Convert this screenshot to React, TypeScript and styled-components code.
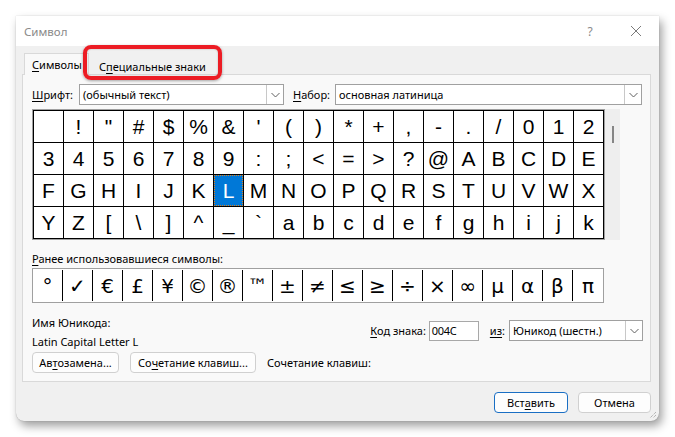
import React from 'react';
import styled, { createGlobalStyle } from 'styled-components';

const GlobalStyle = createGlobalStyle`
  html, body { margin: 0; padding: 0; background: #ffffff; }
  body { font-family: "Noto Sans", "Segoe UI", sans-serif; color: #000; }
  * { box-sizing: border-box; }
`;

const Page = styled.div`
  width: 675px;
  height: 437px;
  padding: 16px 16px 0 16px;
  background: #ffffff;
`;

const Dialog = styled.div`
  position: relative;
  width: 643px;
  height: 405px;
  background: #f0f0f0;
  border-radius: 0 0 8px 8px;
  box-shadow: 3px 5px 10px rgba(0, 0, 0, 0.38), 0 0 1px rgba(0, 0, 0, 0.35);
  display: flex;
  flex-direction: column;
`;

const TitleBar = styled.div`
  height: 30px;
  background: #ffffff;
  display: flex;
  align-items: center;
  padding-left: 8px;
`;

const Title = styled.span`
  font-size: 11.5px;
  color: #8a8a8a;
  flex: 1;
`;

const TitleButton = styled.div`
  width: 46px;
  height: 30px;
  display: flex;
  align-items: center;
  justify-content: center;
  font-size: 12px;
  color: #8a8a8a;
`;

const Body = styled.div`
  flex: 1;
  display: flex;
  flex-direction: column;
  padding: 7px 8px 8px 6px;
`;

const TabList = styled.div`
  position: relative;
  z-index: 1;
  display: flex;
  align-items: flex-end;
  height: 22px;
  margin: 0 0 -1px 2px;
`;

const Tab = styled.div<{ $active?: boolean }>`
  height: ${(p) => (p.$active ? '22px' : '18px')};
  ${(p) => (p.$active ? 'width: 65px;' : '')}
  padding: 0 ${(p) => (p.$active ? '7px' : '9px')};
  display: flex;
  align-items: center;
  font-size: 11px;
  white-space: nowrap;
  background: ${(p) => (p.$active ? '#f9f9f9' : 'transparent')};
  border: 1px solid ${(p) => (p.$active ? '#d9d9d9' : 'transparent')};
  border-bottom: none;
`;

const Highlight = styled.div`
  position: absolute;
  left: 59px;
  top: -8px;
  width: 139px;
  height: 35px;
  border: 4px solid #ec1c24;
  border-radius: 8px;
  box-shadow: 0 1px 3px rgba(0, 0, 0, 0.35), inset 0 0 2px rgba(0, 0, 0, 0.25);
  pointer-events: none;
`;

const Panel = styled.div`
  flex: 1;
  background: #f9f9f9;
  border: 1px solid #d9d9d9;
  padding: 9px 7px 0 9px;
  display: flex;
  flex-direction: column;
`;

const Row = styled.div`
  display: flex;
  align-items: center;
`;

const Label = styled.span<{ $w?: number; $ml?: number }>`
  font-size: 11px;
  white-space: nowrap;
  ${(p) => (p.$w ? `width: ${p.$w}px;` : '')}
  ${(p) => (p.$ml ? `margin-left: ${p.$ml}px;` : '')}
`;

const Acc = styled.span`
  text-decoration: underline;
  text-underline-offset: 2px;
`;

const Combo = styled.div<{ $w: number; $ml?: number }>`
  width: ${(p) => p.$w}px;
  height: 21px;
  ${(p) => (p.$ml ? `margin-left: ${p.$ml}px;` : '')}
  background: #ffffff;
  border: 1px solid #a0a0a0;
  display: flex;
  align-items: stretch;
`;

const ComboText = styled.div`
  flex: 1;
  font-size: 11px;
  padding-left: 3px;
  display: flex;
  align-items: center;
  white-space: nowrap;
  overflow: hidden;
`;

const DropButton = styled.div`
  width: 17px;
  border-left: 1px solid #c8c8c8;
  display: flex;
  align-items: center;
  justify-content: center;
`;

const GridArea = styled.div`
  display: flex;
  margin-top: 4px;
`;

const CharGrid = styled.div`
  display: grid;
  grid-template-columns: repeat(19, 29px);
  grid-auto-rows: 31px;
  gap: 1px;
  padding: 1px;
  background: #000000;
  border: 1px solid #a0a0a0;
`;

const Cell = styled.div<{ $sel?: boolean }>`
  background: ${(p) => (p.$sel ? '#0078d7' : '#ffffff')};
  color: ${(p) => (p.$sel ? '#ffffff' : '#000000')};
  display: flex;
  align-items: center;
  justify-content: center;
  font-family: "Liberation Sans", Arial, sans-serif;
  font-size: 21px;
  line-height: 1;
  ${(p) => (p.$sel ? 'outline: 1px dotted #e0801c; outline-offset: -1px;' : '')}
`;

const Scrollbar = styled.div`
  width: 15px;
  background: #eeeeee;
  padding-top: 17px;
  padding-left: 7px;
`;

const Thumb = styled.div`
  width: 2px;
  height: 17px;
  background: #858585;
`;

const SectionLabel = styled.div`
  font-size: 11px;
  margin-top: 11px;
  line-height: 16px;
`;

const RecentBox = styled.div`
  margin-top: 1px;
  width: 572px;
  height: 35px;
  background: #ffffff;
  border: 1px solid #a0a0a0;
  display: grid;
  grid-template-columns: repeat(19, 30px);
`;

const RecentCell = styled.div`
  display: flex;
  align-items: center;
  justify-content: center;
  margin: 1px 0;
  border-right: 1px solid #000;
  font-family: "DejaVu Sans", sans-serif;
  font-size: 20px;
  &:last-child { border-right: none; }
`;

const InfoRow = styled.div`
  display: flex;
  align-items: flex-start;
  margin-top: 10px;
`;

const InfoCol = styled.div`
  display: flex;
  flex-direction: column;
`;

const InfoLine = styled.div`
  font-size: 11px;
  line-height: 19px;
  height: 19px;
`;

const CodeGroup = styled.div`
  margin-left: auto;
  margin-top: 7px;
  display: flex;
  align-items: center;
`;

const CodeInput = styled.div`
  width: 50px;
  height: 20px;
  margin-left: 3px;
  background: #ffffff;
  border: 1px solid #a8a8a8;
  font-size: 11px;
  display: flex;
  align-items: center;
  padding-left: 2px;
  letter-spacing: -0.3px;
`;

const ButtonsRow = styled.div`
  display: flex;
  align-items: center;
  gap: 11px;
  margin-top: 1px;
`;

const Button = styled.div<{ $w: number; $primary?: boolean }>`
  width: ${(p) => p.$w}px;
  height: 21px;
  border-radius: 4px;
  background: #fdfdfd;
  border: 1px solid ${(p) => (p.$primary ? '#1a6fc4' : '#d0d0d0')};
  display: flex;
  align-items: center;
  justify-content: center;
  font-size: 11px;
  white-space: nowrap;
`;

const Footer = styled.div`
  display: flex;
  justify-content: flex-end;
  gap: 10px;
  margin-top: 10px;
`;

const Grip = styled.svg`
  position: absolute;
  right: 2px;
  bottom: 2px;
`;

const chars: string[] = [];
for (let c = 0x20; c <= 0x6b; c++) chars.push(String.fromCharCode(c));

const recent = ['°', '✓', '€', '£', '¥', '©', '®', '™', '±', '≠', '≤', '≥', '÷', '×', '∞', 'μ', 'α', 'β', 'π'];

const Chevron = () => (
  <svg width="9" height="6" viewBox="0 0 9 6">
    <path d="M0.5 1 L4.5 5 L8.5 1" fill="none" stroke="#606060" strokeWidth="1" />
  </svg>
);

export default function App() {
  return (
    <>
      <GlobalStyle />
      <Page>
        <Dialog>
          <TitleBar>
            <Title>Символ</Title>
            <TitleButton>?</TitleButton>
            <TitleButton>
              <svg width="12" height="12" viewBox="0 0 12 12">
                <path d="M1 1 L11 11 M11 1 L1 11" stroke="#7a7a7a" strokeWidth="1" />
              </svg>
            </TitleButton>
          </TitleBar>
          <Body>
            <TabList>
              <Tab $active>
                <Acc>С</Acc>имволы
              </Tab>
              <Tab>
                С<Acc>п</Acc>ециальные знаки
              </Tab>
              <Highlight />
            </TabList>
            <Panel>
              <Row>
                <Label $w={47}>
                  <Acc>Ш</Acc>рифт:
                </Label>
                <Combo $w={205}>
                  <ComboText>(обычный текст)</ComboText>
                  <DropButton>
                    <Chevron />
                  </DropButton>
                </Combo>
                <Label $w={42} $ml={9}>
                  <Acc>Н</Acc>абор:
                </Label>
                <Combo $w={307}>
                  <ComboText>основная латиница</ComboText>
                  <DropButton>
                    <Chevron />
                  </DropButton>
                </Combo>
              </Row>
              <GridArea>
                <CharGrid>
                  {chars.map((ch, i) => (
                    <Cell key={i} $sel={ch === 'L'}>
                      {ch}
                    </Cell>
                  ))}
                </CharGrid>
                <Scrollbar>
                  <Thumb />
                </Scrollbar>
              </GridArea>
              <SectionLabel>
                <Acc>Р</Acc>анее использовавшиеся символы:
              </SectionLabel>
              <RecentBox>
                {recent.map((ch, i) => (
                  <RecentCell key={i}>{ch}</RecentCell>
                ))}
              </RecentBox>
              <InfoRow>
                <InfoCol>
                  <InfoLine>Имя Юникода:</InfoLine>
                  <InfoLine>Latin Capital Letter L</InfoLine>
                </InfoCol>
                <CodeGroup>
                  <Label>
                    <Acc>К</Acc>од знака:
                  </Label>
                  <CodeInput>004C</CodeInput>
                  <Label $ml={11}>
                    <Acc>из</Acc>:
                  </Label>
                  <Combo $w={134} $ml={4}>
                    <ComboText>Юникод (шестн.)</ComboText>
                    <DropButton>
                      <Chevron />
                    </DropButton>
                  </Combo>
                </CodeGroup>
              </InfoRow>
              <ButtonsRow>
                <Button $w={87}>
                  Ав<Acc>т</Acc>озамена...
                </Button>
                <Button $w={126}>
                  Со<Acc>ч</Acc>етание клавиш...
                </Button>
                <Label>Сочетание клавиш:</Label>
              </ButtonsRow>
            </Panel>
            <Footer>
              <Button $w={74} $primary>
                Вст<Acc>а</Acc>вить
              </Button>
              <Button $w={73}>Отмена</Button>
            </Footer>
          </Body>
          <Grip width="10" height="10" viewBox="0 0 10 10">
            <path d="M9 3 L3 9 M9 6 L6 9" stroke="#9a9a9a" strokeWidth="1" strokeDasharray="1 1" />
          </Grip>
        </Dialog>
      </Page>
    </>
  );
}
